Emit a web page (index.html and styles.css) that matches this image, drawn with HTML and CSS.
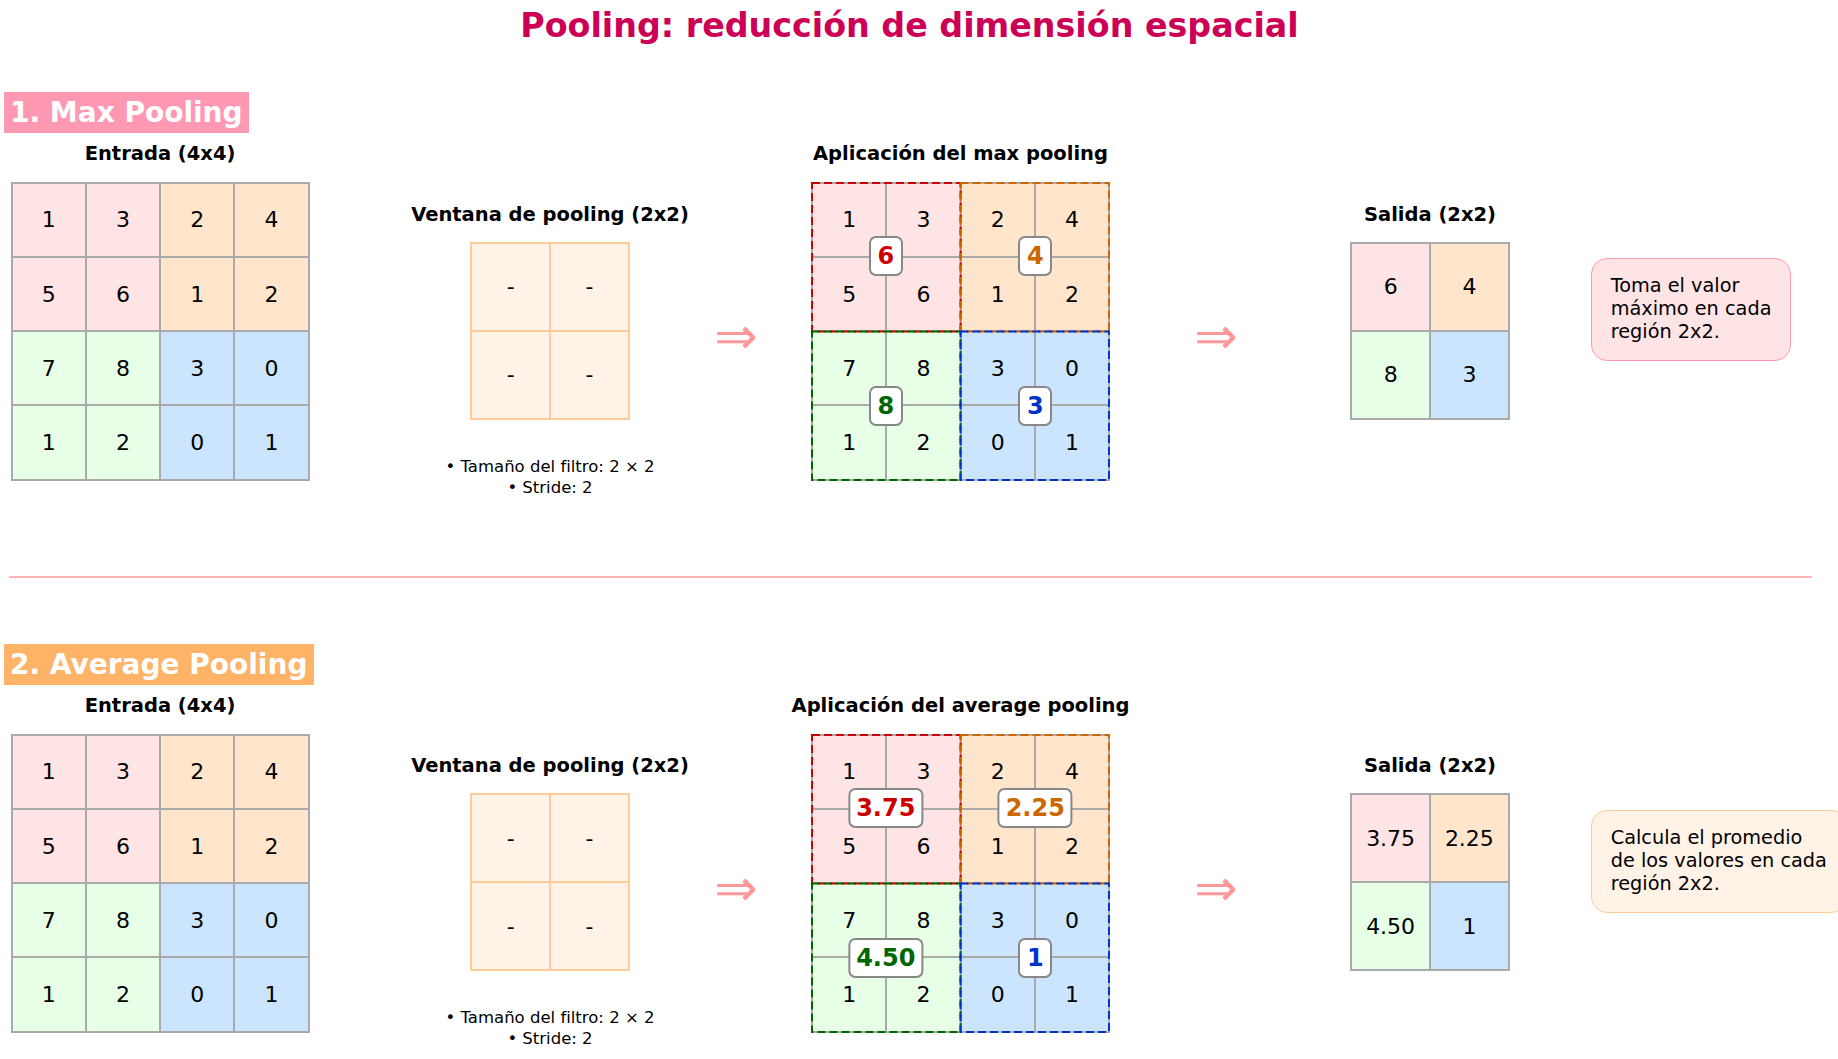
FILE: index.html
```html
<!DOCTYPE html>
<html lang="es">
<head>
<meta charset="utf-8">
<title>Pooling</title>
<link rel="stylesheet" href="styles.css">
</head>
<body>
<div class="page">
  <h1 class="main-title">Pooling: reducción de dimensión espacial</h1>

  <section class="section sec-max">
    <div class="sec-header hdr-max">1. Max Pooling</div>
    <div class="row">
      <div class="col col-in">
        <div class="col-title">Entrada (4x4)</div>
        <div class="grid4">
          <div class="c p">1</div><div class="c p">3</div><div class="c o">2</div><div class="c o">4</div>
          <div class="c p">5</div><div class="c p">6</div><div class="c o">1</div><div class="c o">2</div>
          <div class="c g">7</div><div class="c g">8</div><div class="c b">3</div><div class="c b">0</div>
          <div class="c g">1</div><div class="c g">2</div><div class="c b">0</div><div class="c b">1</div>
        </div>
      </div>
      <div class="col col-win">
        <div class="col-title">Ventana de pooling (2x2)</div>
        <div class="grid2 win">
          <div class="w">-</div><div class="w">-</div>
          <div class="w">-</div><div class="w">-</div>
        </div>
        <div class="bullets">• Tamaño del filtro: 2 × 2<br>• Stride: 2</div>
      </div>
      <div class="arrow arrow1">⇒</div>
      <div class="col col-app">
        <div class="col-title">Aplicación del max pooling</div>
        <div class="appwrap">
          <div class="grid4">
            <div class="c p">1</div><div class="c p">3</div><div class="c o">2</div><div class="c o">4</div>
            <div class="c p">5</div><div class="c p">6</div><div class="c o">1</div><div class="c o">2</div>
            <div class="c g">7</div><div class="c g">8</div><div class="c b">3</div><div class="c b">0</div>
            <div class="c g">1</div><div class="c g">2</div><div class="c b">0</div><div class="c b">1</div>
          </div>
          <svg class="dash" viewBox="0 0 299 299" width="299" height="299">
            <rect x="1" y="1" width="148.5" height="148.5" fill="none" stroke="#cc0000" stroke-width="2" stroke-dasharray="8 4"/>
            <rect x="149.5" y="1" width="148.5" height="148.5" fill="none" stroke="#cc6600" stroke-width="2" stroke-dasharray="8 4"/>
            <rect x="1" y="149.5" width="148.5" height="148.5" fill="none" stroke="#006600" stroke-width="2" stroke-dasharray="8 4"/>
            <rect x="149.5" y="149.5" width="148.5" height="148.5" fill="none" stroke="#0033cc" stroke-width="2" stroke-dasharray="8 4"/>
          </svg>
          <div class="badge bq1 t-red">6</div>
          <div class="badge bq2 t-orange">4</div>
          <div class="badge bq3 t-green">8</div>
          <div class="badge bq4 t-blue">3</div>
        </div>
      </div>
      <div class="arrow arrow2">⇒</div>
      <div class="col col-out">
        <div class="col-title">Salida (2x2)</div>
        <div class="grid2 out">
          <div class="c p">6</div><div class="c o">4</div>
          <div class="c g">8</div><div class="c b">3</div>
        </div>
      </div>
      <div class="note note-max">Toma el valor<br>máximo en cada<br>región 2x2.</div>
    </div>
  </section>

  <div class="divider"></div>

  <section class="section sec-avg">
    <div class="sec-header hdr-avg">2. Average Pooling</div>
    <div class="row">
      <div class="col col-in">
        <div class="col-title">Entrada (4x4)</div>
        <div class="grid4">
          <div class="c p">1</div><div class="c p">3</div><div class="c o">2</div><div class="c o">4</div>
          <div class="c p">5</div><div class="c p">6</div><div class="c o">1</div><div class="c o">2</div>
          <div class="c g">7</div><div class="c g">8</div><div class="c b">3</div><div class="c b">0</div>
          <div class="c g">1</div><div class="c g">2</div><div class="c b">0</div><div class="c b">1</div>
        </div>
      </div>
      <div class="col col-win">
        <div class="col-title">Ventana de pooling (2x2)</div>
        <div class="grid2 win">
          <div class="w">-</div><div class="w">-</div>
          <div class="w">-</div><div class="w">-</div>
        </div>
        <div class="bullets">• Tamaño del filtro: 2 × 2<br>• Stride: 2</div>
      </div>
      <div class="arrow arrow1">⇒</div>
      <div class="col col-app">
        <div class="col-title">Aplicación del average pooling</div>
        <div class="appwrap">
          <div class="grid4">
            <div class="c p">1</div><div class="c p">3</div><div class="c o">2</div><div class="c o">4</div>
            <div class="c p">5</div><div class="c p">6</div><div class="c o">1</div><div class="c o">2</div>
            <div class="c g">7</div><div class="c g">8</div><div class="c b">3</div><div class="c b">0</div>
            <div class="c g">1</div><div class="c g">2</div><div class="c b">0</div><div class="c b">1</div>
          </div>
          <svg class="dash" viewBox="0 0 299 299" width="299" height="299">
            <rect x="1" y="1" width="148.5" height="148.5" fill="none" stroke="#cc0000" stroke-width="2" stroke-dasharray="8 4"/>
            <rect x="149.5" y="1" width="148.5" height="148.5" fill="none" stroke="#cc6600" stroke-width="2" stroke-dasharray="8 4"/>
            <rect x="1" y="149.5" width="148.5" height="148.5" fill="none" stroke="#006600" stroke-width="2" stroke-dasharray="8 4"/>
            <rect x="149.5" y="149.5" width="148.5" height="148.5" fill="none" stroke="#0033cc" stroke-width="2" stroke-dasharray="8 4"/>
          </svg>
          <div class="badge bq1 t-red">3.75</div>
          <div class="badge bq2 t-orange">2.25</div>
          <div class="badge bq3 t-green">4.50</div>
          <div class="badge bq4 t-blue">1</div>
        </div>
      </div>
      <div class="arrow arrow2">⇒</div>
      <div class="col col-out">
        <div class="col-title">Salida (2x2)</div>
        <div class="grid2 out">
          <div class="c p">3.75</div><div class="c o">2.25</div>
          <div class="c g">4.50</div><div class="c b">1</div>
        </div>
      </div>
      <div class="note note-avg">Calcula el promedio<br>de los valores en cada<br>región 2x2.</div>
    </div>
  </section>
</div>
</body>
</html>
```
FILE: styles.css
```css
* { box-sizing: border-box; }
html, body {
  margin: 0;
  padding: 0;
  background: #ffffff;
}
body {
  width: 1838px;
  height: 1059px;
  overflow: hidden;
  font-family: "DejaVu Sans", "Liberation Sans", sans-serif;
  color: #000;
}
.page {
  width: 1838px;
  height: 1059px;
  overflow: hidden;
}
.main-title {
  margin: 0;
  padding-right: 19px;
  height: 52px;
  line-height: 52px;
  text-align: center;
  font-size: 33.3px;
  font-weight: bold;
  color: #cc0055;
}
.section {
  margin-top: 40px;
}
.sec-avg {
  margin-top: 66px;
}
.sec-header {
  display: inline-block;
  margin-left: 3.5px;
  height: 41px;
  line-height: 41px;
  padding: 0 6.5px;
  font-size: 28px;
  font-weight: bold;
  color: #ffffff;
}
.hdr-max { background: #ff99b3; }
.hdr-avg { background: #ffb366; }

.row {
  display: flex;
  align-items: flex-start;
  margin-top: 9px;
  height: 360px;
}
.col {
  display: flex;
  flex-direction: column;
  align-items: center;
  flex: none;
}
.col-title {
  font-size: 19.5px;
  font-weight: bold;
  line-height: 24px;
  height: 24px;
  white-space: nowrap;
}
.col-in { width: 299px; margin-left: 10.5px; }
.col-win { width: 240px; margin-left: 120.5px; padding-top: 60.5px; }
.col-app { width: 299px; margin-left: 45px; }
.col-out { width: 240px; margin-left: 64px; padding-top: 60.5px; }

.grid4 {
  display: grid;
  grid-template-columns: repeat(4, 1fr);
  grid-template-rows: repeat(4, 1fr);
  width: 299px;
  height: 299px;
  border: 1px solid #aaaaaa;
  margin-top: 15.7px;
}
.grid2 {
  display: grid;
  grid-template-columns: repeat(2, 1fr);
  grid-template-rows: repeat(2, 1fr);
  width: 159.5px;
  height: 178px;
  margin-top: 15px;
}
.out { border: 1px solid #aaaaaa; }
.win { border: 1px solid #ffcc99; }

.c {
  border: 1px solid #aaaaaa;
  display: flex;
  align-items: center;
  justify-content: center;
  font-size: 22px;
}
.w {
  border: 1px solid #ffcc99;
  background: #fff2e6;
  display: flex;
  align-items: center;
  justify-content: center;
  font-size: 22px;
}
.p { background: #ffe4e6; }
.o { background: #ffe5cc; }
.g { background: #e6ffe6; }
.b { background: #cce5ff; }

.bullets {
  margin-top: 36px;
  font-size: 16.5px;
  line-height: 21px;
  text-align: center;
  white-space: nowrap;
}

.arrow {
  flex: none;
  width: 60px;
  text-align: center;
  font-size: 52px;
  line-height: 56px;
  color: #ff9999;
  margin-top: 166px;
}
.arrow1 { margin-left: 36px; }
.arrow2 { margin-left: 76px; }

.appwrap {
  position: relative;
  width: 299px;
  height: 299px;
  margin-top: 15.7px;
}
.appwrap .grid4 { margin-top: 0; }
.dash {
  position: absolute;
  left: 0;
  top: 0;
}
.badge {
  position: absolute;
  transform: translate(-50%, -50%);
  background: #ffffff;
  border: 2px solid #888888;
  border-radius: 7px;
  padding: 0 6px;
  min-width: 34px;
  height: 40px;
  line-height: 36px;
  text-align: center;
  font-size: 24px;
  font-weight: bold;
  white-space: nowrap;
}
.bq1 { left: 74.75px; top: 74.75px; }
.bq2 { left: 224.25px; top: 74.75px; }
.bq3 { left: 74.75px; top: 224.25px; }
.bq4 { left: 224.25px; top: 224.25px; }
.t-red { color: #cc0000; }
.t-orange { color: #cc6600; }
.t-green { color: #006600; }
.t-blue { color: #0033cc; }

.note {
  flex: none;
  margin-left: 40.7px;
  margin-top: 116px;
  padding: 16px 19px 17px 19px;
  border-radius: 16px;
  font-size: 19.3px;
  line-height: 22.8px;
  white-space: nowrap;
}
.note-max { background: #ffe4e6; border: 1.5px solid #ff99b3; }
.note-avg { background: #fff2e6; border: 1.5px solid #ffcc99; }

.divider {
  margin-top: 73.7px;
  margin-left: 9.4px;
  width: 1802.6px;
  height: 2.3px;
  background: #ffb3b3;
}
```
